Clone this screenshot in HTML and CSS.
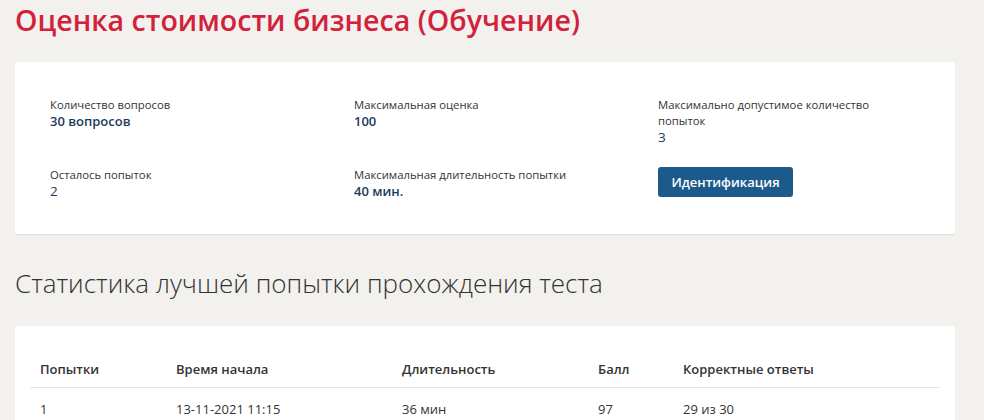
FILE: index.html
```html
<!DOCTYPE html>
<html lang="ru">
<head>
<meta charset="utf-8">
<title>Оценка стоимости бизнеса (Обучение)</title>
<link rel="stylesheet" href="styles.css">
</head>
<body>
<div class="page">
  <h1 class="title">Оценка стоимости бизнеса (Обучение)</h1>
  <section class="card info">
    <div class="grid">
      <div class="item">
        <div class="label">Количество вопросов</div>
        <div class="value">30 вопросов</div>
      </div>
      <div class="item">
        <div class="label">Максимальная оценка</div>
        <div class="value">100</div>
      </div>
      <div class="item">
        <div class="label">Максимально допустимое количество попыток</div>
        <div class="value light">3</div>
      </div>
      <div class="item">
        <div class="label">Осталось попыток</div>
        <div class="value light">2</div>
      </div>
      <div class="item">
        <div class="label">Максимальная длительность попытки</div>
        <div class="value">40 мин.</div>
      </div>
      <div class="item">
        <button class="btn">Идентификация</button>
      </div>
    </div>
  </section>
  <h2 class="subtitle">Статистика лучшей попытки прохождения теста</h2>
  <section class="card stats">
    <table class="table">
      <thead>
        <tr>
          <th class="c1">Попытки</th>
          <th class="c2">Время начала</th>
          <th class="c3">Длительность</th>
          <th class="c4">Балл</th>
          <th class="c5">Корректные ответы</th>
        </tr>
      </thead>
      <tbody>
        <tr>
          <td>1</td>
          <td>13-11-2021 11:15</td>
          <td>36 мин</td>
          <td>97</td>
          <td>29 из 30</td>
        </tr>
      </tbody>
    </table>
  </section>
</div>
</body>
</html>
```

FILE: styles.css
```css
html, body {
  margin: 0;
  padding: 0;
  background: #f2f1ee;
  font-family: "Open Sans", "Noto Sans", sans-serif;
  color: #333;
}
.page {
  padding: 0 29px 0 15px;
}
.title {
  margin: 0;
  font-family: "Open Sans", sans-serif;
  font-weight: 600;
  font-size: 28.6px;
  line-height: 40px;
  color: #d3213c;
}
.card {
  background: #fff;
  border-radius: 3px;
  box-shadow: 0 1px 1px rgba(0,0,0,0.08);
}
.info {
  margin-top: 22px;
  height: 172px;
  box-sizing: border-box;
  padding: 35px 35px 0 35px;
}
.grid {
  display: grid;
  grid-template-columns: 304px 304px 240px;
  grid-auto-rows: 70px;
}
.label {
  font-size: 11.3px;
  line-height: 16px;
  color: #333;
}
.value {
  font-size: 13px;
  line-height: 16px;
  font-weight: 600;
  color: #1d3a5c;
}
.value.light {
  font-weight: 400;
  font-size: 13.5px;
}
.btn {
  width: 135px;
  height: 30px;
  border: 0;
  border-radius: 3px;
  background: #1c5a8c;
  color: #fff;
  font-family: "Open Sans", sans-serif;
  font-size: 13px;
  font-weight: 600;
  cursor: pointer;
}
.subtitle {
  margin: 0;
  padding-top: 31px;
  font-weight: 300;
  font-size: 26px;
  line-height: 36px;
  color: #333;
}
.stats {
  margin-top: 25px;
  padding: 20px 15px 10px 15px;
}
.table {
  width: 910px;
  border-collapse: collapse;
  font-size: 13px;
}
.table th {
  text-align: left;
  font-weight: 600;
  color: #333;
  padding: 14px 10px 9px 10px;
  border-bottom: 1px solid #e6e6e6;
}
.table td {
  padding: 12px 10px 8px 10px;
  color: #333;
}
.c1 { width: 116px; }
.c2 { width: 206px; }
.c3 { width: 176px; }
.c4 { width: 65px; }
```
